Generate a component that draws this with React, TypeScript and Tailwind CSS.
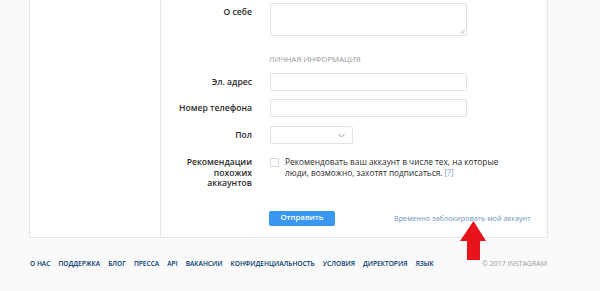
const footerLinks = [
  "О НАС",
  "ПОДДЕРЖКА",
  "БЛОГ",
  "ПРЕССА",
  "API",
  "ВАКАНСИИ",
  "КОНФИДЕНЦИАЛЬНОСТЬ",
  "УСЛОВИЯ",
  "ДИРЕКТОРИЯ",
  "ЯЗЫК",
];

const Label = ({ children }: { children: React.ReactNode }) => (
  <div className="w-[91px] shrink-0 text-right text-[8.6px] font-semibold leading-[10.5px] text-[#2b2b2b]">
    {children}
  </div>
);

export default function App() {
  return (
    <div
      className="relative h-[291px] w-[600px] overflow-hidden bg-[#fafafa]"
      style={{ fontFamily: '"Open Sans", "Noto Sans", sans-serif' }}
    >
      <div className="ml-[29px] flex h-[238px] w-[519px] border border-t-0 border-[#e6e6e6] bg-white">
        <div className="w-[131px] shrink-0 border-r border-[#e6e6e6]" />

        <div className="flex-1 pt-[3px]">
          <div className="flex items-start gap-[18px]">
            <div className="pt-[4px]">
              <Label>О себе</Label>
            </div>
            <div className="relative h-[33px] w-[197px] rounded-[2px] border border-[#e3e3e3]">
              <svg
                className="absolute bottom-[1px] right-[1px]"
                width="5"
                height="5"
                viewBox="0 0 5 5"
              >
                <path d="M4.5 0.5 L0.5 4.5 M4.5 2.5 L2.5 4.5" stroke="#999" strokeWidth="0.7" />
              </svg>
            </div>
          </div>

          <div className="ml-[108px] mt-[18px] text-[7.8px] leading-[10px] text-[#999]">
            ЛИЧНАЯ ИНФОРМАЦИЯ
          </div>

          <div className="mt-[9px] flex items-center gap-[18px]">
            <Label>Эл. адрес</Label>
            <div className="h-[18px] w-[197px] rounded-[2px] border border-[#e3e3e3]" />
          </div>

          <div className="mt-[8px] flex items-center gap-[18px]">
            <Label>Номер телефона</Label>
            <div className="h-[18px] w-[197px] rounded-[2px] border border-[#e3e3e3]" />
          </div>

          <div className="mt-[9px] flex items-center gap-[18px]">
            <Label>Пол</Label>
            <div className="flex h-[18px] w-[83px] items-center justify-end rounded-[2px] border border-[#e3e3e3] pr-[7px]">
              <svg width="7" height="5" viewBox="0 0 7 5">
                <path d="M0.5 1 L3.5 4 L6.5 1" fill="none" stroke="#8e8e8e" strokeWidth="0.9" />
              </svg>
            </div>
          </div>

          <div className="mt-[13px] flex items-start gap-[18px]">
            <Label>
              Рекомендации
              <br />
              похожих
              <br />
              аккаунтов
            </Label>
            <div className="flex items-start gap-[6px]">
              <div className="mt-[1px] h-[9px] w-[9px] shrink-0 rounded-[1px] border border-[#d6d6d6]" />
              <p className="w-[222px] text-[8.3px] leading-[10.5px] text-[#2b2b2b]">
                Рекомендовать ваш аккаунт в числе тех, на которые люди, возможно,
                захотят подписаться. <a className="text-[#6f9cc9]">[?]</a>
              </p>
            </div>
          </div>

          <div className="mt-[22px] flex items-center">
            <div className="ml-[108px] flex h-[15px] w-[66px] items-center justify-center rounded-[2px] bg-[#3897f0] text-[7.8px] font-semibold text-white">
              Отправить
            </div>
            <div className="ml-[59px] whitespace-nowrap text-[7.25px] text-[#6f93b8]">
              Временно заблокировать мой аккаунт
            </div>
          </div>
        </div>
      </div>

      <div className="ml-[30px] mt-[21px] flex w-[517px] items-center justify-between whitespace-nowrap text-[6.6px] leading-[10px]">
        <div className="flex gap-[8px] font-semibold text-[#003569]">
          {footerLinks.map((l) => (
            <span key={l}>{l}</span>
          ))}
        </div>
        <span className="text-[7px] text-[#999]">© 2017 INSTAGRAM</span>
      </div>

      <svg
        className="absolute left-[460px] top-[221px]"
        width="27"
        height="40"
        viewBox="0 0 27 40"
      >
        <path d="M13.5 0 L26 20 L20 20 L20 39 L7 39 L7 20 L0 20 Z" fill="#e8141c" />
      </svg>
    </div>
  );
}
